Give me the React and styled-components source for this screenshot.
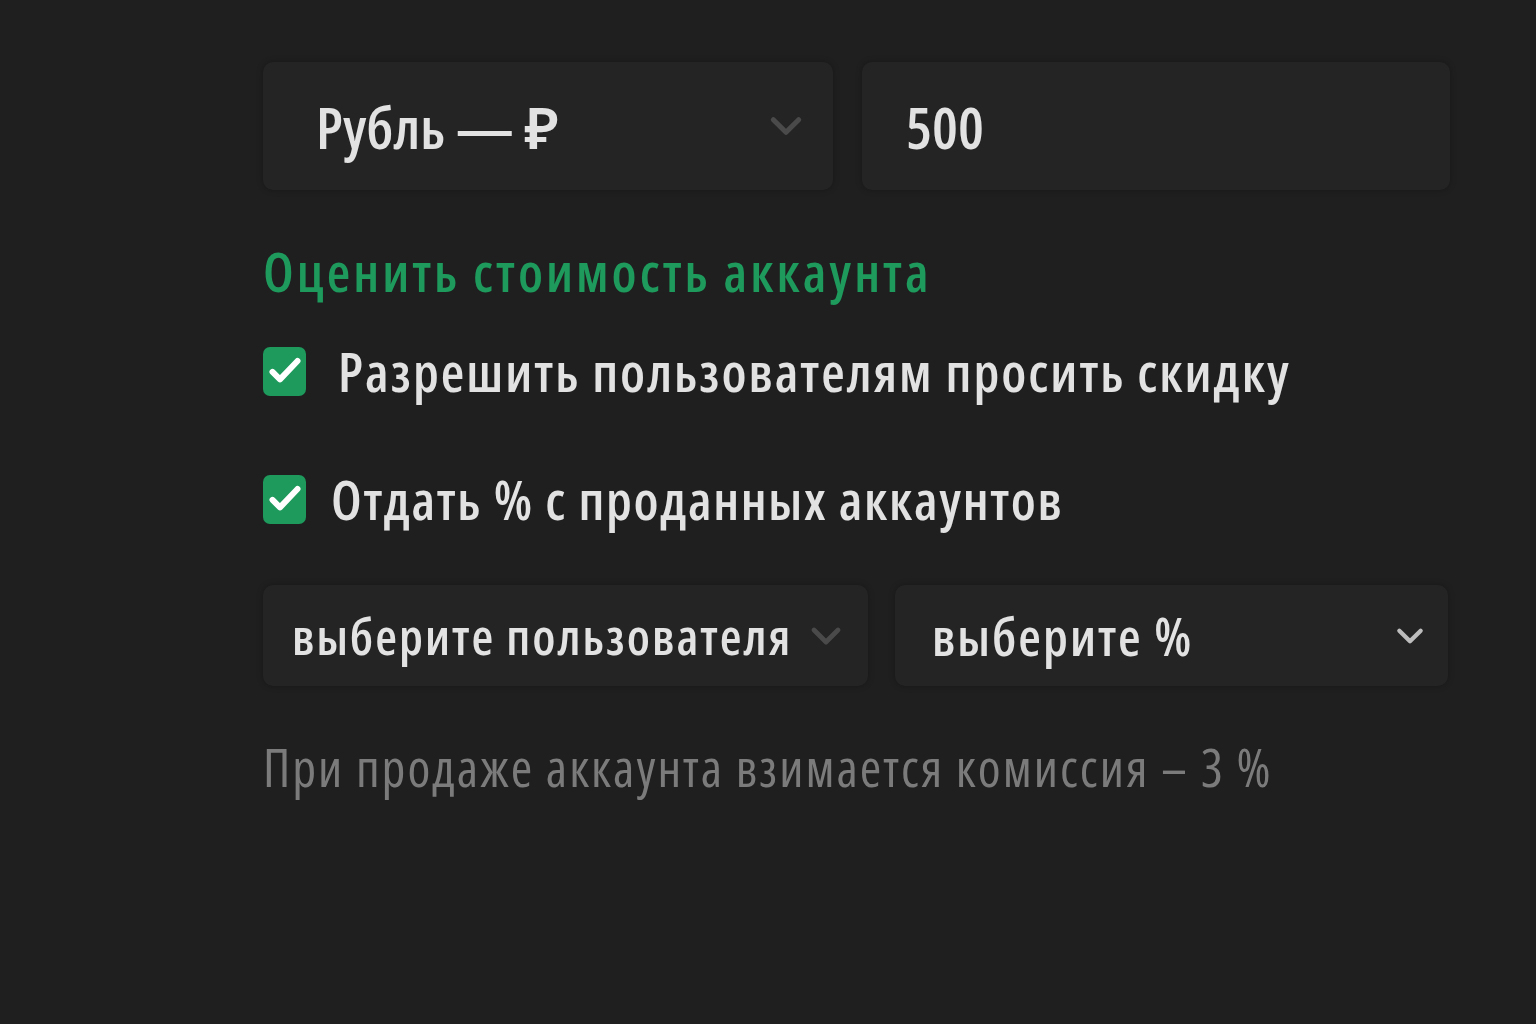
import React from "react";
import styled, { createGlobalStyle } from "styled-components";

const Global = createGlobalStyle`
  html, body {
    margin: 0;
    padding: 0;
    background: #1f1f1f;
  }
  body {
    font-family: "Open Sans", "Noto Sans", sans-serif;
    font-stretch: 75%;
  }
`;

const Page = styled.div`
  width: 1536px;
  height: 1024px;
  background: #1f1f1f;
  box-sizing: border-box;
  padding: 62px 0 0 263px;
`;

const Form = styled.div`
  width: 1187px;
  display: flex;
  flex-direction: column;
`;

const Row = styled.div`
  display: grid;
  grid-template-columns: ${p => p.cols};
  gap: ${p => p.gap}px;
  margin-top: ${p => p.mt || 0}px;
`;

const Field = styled.div`
  height: ${p => p.h}px;
  background: #242424;
  border-radius: 10px;
  box-shadow: 0 0 6px rgba(0, 0, 0, 0.25);
  display: flex;
  align-items: center;
  justify-content: space-between;
  padding: 0 ${p => p.pr}px 0 ${p => p.pl}px;
  box-sizing: border-box;
  color: #e2e2e2;
  font-size: ${p => p.fs}px;
  letter-spacing: ${p => p.ls || 0}px;
  font-weight: 600;
  white-space: nowrap;
`;

const Heading = styled.div`
  color: #1d9a5c;
  font-size: 54px;
  font-weight: 600;
  letter-spacing: 3px;
  margin-top: 43px;
  line-height: 76px;
`;

const CheckRow = styled.label`
  display: flex;
  align-items: center;
  gap: ${p => p.gap}px;
  color: #e2e2e2;
  font-size: 54px;
  font-weight: 600;
  letter-spacing: ${p => p.ls}px;
  line-height: 76px;
  margin-top: ${p => p.mt}px;
`;

const Box = styled.span`
  width: 43px;
  height: 49px;
  border-radius: 7px;
  background: #1d9a5c;
  display: flex;
  align-items: center;
  justify-content: center;
  flex-shrink: 0;
`;

const Note = styled.div`
  color: #7b7b7b;
  font-size: 52px;
  font-weight: 400;
  letter-spacing: 2px;
  line-height: 76px;
  margin-top: 43px;
`;

const Chevron = ({ color, size }) => (
  <svg width={size} height={size} viewBox="0 0 24 24" fill="none">
    <path d="M4 8l8 8 8-8" stroke={color} strokeWidth="3.2" strokeLinecap="round" strokeLinejoin="round" />
  </svg>
);

const Check = () => (
  <svg width="40" height="40" viewBox="0 0 24 24" fill="none">
    <path d="M4.5 12.5l4.5 4.5 10.5-11" stroke="#fff" strokeWidth="3.6" strokeLinecap="round" strokeLinejoin="round" />
  </svg>
);

export default function App() {
  return (
    <>
      <Global />
      <Page>
        <Form>
          <Row cols="570px 588px" gap={29}>
            <Field h={128} pl={53} pr={28} fs={58}>
              <span>Рубль — ₽</span>
              <Chevron color="#4a4a4a" size={38} />
            </Field>
            <Field h={128} pl={44} pr={28} fs={58}>
              <span>500</span>
            </Field>
          </Row>
          <Heading>Оценить стоимость аккаунта</Heading>
          <CheckRow gap={32} mt={24} ls={2}>
            <Box><Check /></Box>
            Разрешить пользователям просить скидку
          </CheckRow>
          <CheckRow gap={25} mt={52} ls={1.65}>
            <Box><Check /></Box>
            Отдать % с проданных аккаунтов
          </CheckRow>
          <Row cols="605px 553px" gap={27} mt={48}>
            <Field h={101} pl={29} pr={24} fs={50} ls={2}>
              <span>выберите пользователя</span>
              <Chevron color="#4a4a4a" size={36} />
            </Field>
            <Field h={101} pl={37} pr={22} fs={52} ls={2}>
              <span>выберите %</span>
              <Chevron color="#bdbdbd" size={32} />
            </Field>
          </Row>
          <Note>При продаже аккаунта взимается комиссия – 3 %</Note>
        </Form>
      </Page>
    </>
  );
}
